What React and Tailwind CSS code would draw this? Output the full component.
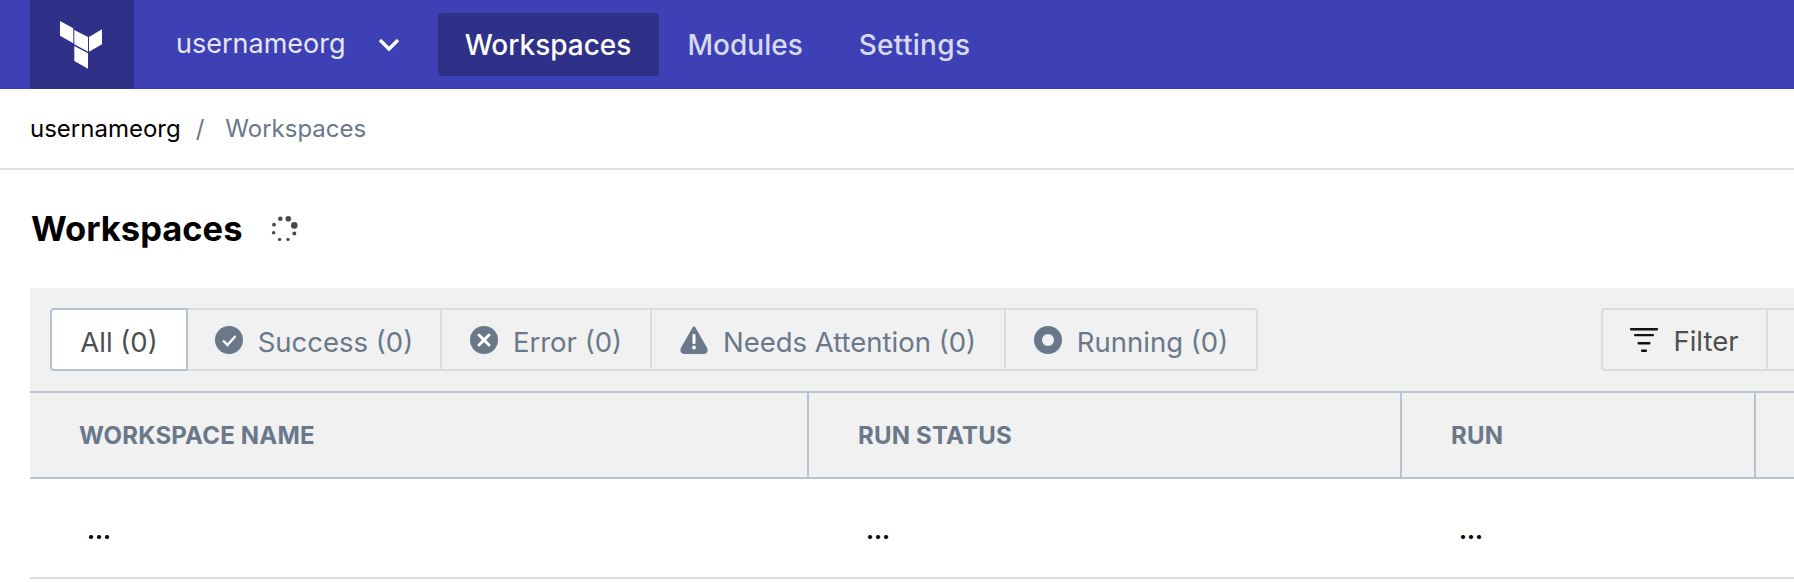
const slate = 'text-[#6a7889]';

function TerraformLogo() {
  return (
    <svg className="mr-[2px]" width="42" height="48" viewBox="60 20 42 48" fill="#fff">
      <path d="M60 20 L73.3 27.3 L73.3 42.3 L60 34.7 Z" />
      <path d="M74.3 29 L88 36 L88 50.7 L74.3 43.3 Z" />
      <path d="M89 36 L102 28.3 L102 43.3 L89 50.7 Z" />
      <path d="M74.3 45 L88 52.3 L88 67.7 L74.3 60 Z" />
    </svg>
  );
}

function Spinner() {
  const dots = [
    [10.3, 3.7, 2.3], [18.3, 3.7, 2.8], [24.3, 10.4, 3.3], [24.3, 18.4, 2],
    [18, 24.4, 1.7], [9.6, 24.4, 1.7], [3.6, 17.7, 1.8], [4, 9.7, 1.9],
  ];
  return (
    <svg width="28" height="28" viewBox="0 0 28 28" fill="#4a4a4a">
      {dots.map(([x, y, r], i) => (
        <circle key={i} cx={x} cy={y} r={r} />
      ))}
    </svg>
  );
}

function SuccessIcon() {
  return (
    <svg width="28" height="28" viewBox="0 0 28 28">
      <circle cx="14" cy="14" r="14" fill="#6a7889" />
      <path d="M8 14.5 L12.5 19 L20.5 10" fill="none" stroke="#fff" strokeWidth="2.4" />
    </svg>
  );
}

function ErrorIcon() {
  return (
    <svg width="28" height="28" viewBox="0 0 28 28">
      <circle cx="14" cy="14" r="14" fill="#6a7889" />
      <path d="M9 9 L19 19 M19 9 L9 19" fill="none" stroke="#fff" strokeWidth="3" strokeLinecap="round" />
    </svg>
  );
}

function WarningIcon() {
  return (
    <svg width="28" height="28" viewBox="0 0 28 28">
      <path d="M14 2 L26 23 Q26.5 26.5 24 26.5 L4 26.5 Q1.5 26.5 2 23 Z" fill="#6a7889" stroke="#6a7889" strokeWidth="3" strokeLinejoin="round" />
      <rect x="12.5" y="8" width="3" height="10" rx="1" fill="#fff" />
      <circle cx="14" cy="21.5" r="1.9" fill="#fff" />
    </svg>
  );
}

function RunningIcon() {
  return (
    <svg width="28" height="28" viewBox="0 0 28 28">
      <circle cx="14" cy="14" r="10" fill="none" stroke="#6a7889" strokeWidth="8" />
    </svg>
  );
}

function FilterIcon() {
  return (
    <svg width="28" height="24" viewBox="0 0 28 24" fill="#111">
      <rect x="0" y="0" width="28" height="2.6" rx="1" />
      <rect x="4" y="6" width="20" height="2.2" rx="1" />
      <rect x="7.5" y="14" width="13" height="2.4" rx="1" />
      <rect x="11" y="21.5" width="6" height="2.5" rx="1" />
    </svg>
  );
}

const onglets = [
  { label: 'Success (0)', icon: <SuccessIcon />, width: 'w-[254px]' },
  { label: 'Error (0)', icon: <ErrorIcon />, width: 'w-[210px]' },
  { label: 'Needs Attention (0)', icon: <WarningIcon />, width: 'w-[354px]' },
  { label: 'Running (0)', icon: <RunningIcon />, width: 'w-[252px]' },
];

const colonnes = [
  { titre: 'WORKSPACE NAME', width: 'w-[779px]' },
  { titre: 'RUN STATUS', width: 'w-[593px]' },
  { titre: 'RUN', width: 'w-[354px]' },
  { titre: '', width: 'w-[300px]' },
];

export default function App() {
  return (
    <div className="h-[582px] w-[1794px] overflow-hidden bg-white font-['Inter',sans-serif]">
      <nav className="flex h-[89px] items-center bg-[#3e41b5] pl-[30px]">
        <div className="flex h-full w-[104px] items-center justify-center bg-[#2f3088]">
          <TerraformLogo />
        </div>
        <div className="ml-[42px] flex items-center text-[27px] text-[#e6e6f6]">
          <span>usernameorg</span>
          <svg className="ml-[32px]" width="22" height="14" viewBox="0 0 22 14" fill="none" stroke="#fff" strokeWidth="3.4">
            <path d="M2 2 L11 11 L20 2" />
          </svg>
        </div>
        <a className="ml-[38px] flex h-[63px] w-[221px] items-center justify-center rounded-[4px] bg-[#2f3088] text-[28px] font-medium text-white">
          Workspaces
        </a>
        <a className="ml-[29px] text-[28px] font-medium text-[#d8d9f1]">Modules</a>
        <a className="ml-[56px] text-[28px] font-medium tracking-[0.3px] text-[#d8d9f1]">Settings</a>
      </nav>

      <div className="flex h-[81px] items-center border-b-2 border-[#e0e0e0] pl-[30px] text-[24px]">
        <span className="text-black">usernameorg</span>
        <span className={`ml-[15px] ${slate}`}>/</span>
        <span className={`ml-[21px] ${slate}`}>Workspaces</span>
      </div>

      <div className="flex h-[118px] items-center pl-[31px]">
        <h1 className="text-[34.5px] font-bold text-black">Workspaces</h1>
        <div className="ml-[28px]">
          <Spinner />
        </div>
      </div>

      <div className="ml-[30px] bg-[#f1f1f1]">
        <div className="flex h-[103px] items-start justify-between pl-[20px] pt-[20px]">
          <div className="flex h-[63px] text-[27.5px]">
            <button className="flex w-[138px] items-center justify-center rounded-l-[4px] border-2 border-[#b6c3d3] bg-white text-[#4f4f4f]">
              <span className="pt-[7px]">All (0)</span>
            </button>
            {onglets.map((o) => (
              <button
                key={o.label}
                className={`flex ${o.width} items-center justify-center gap-[15px] border-y-2 border-r-2 border-[#dcdcdc] ${slate} last:rounded-r-[4px]`}
              >
                {o.icon}
                <span className="pt-[7px]">{o.label}</span>
              </button>
            ))}
          </div>
          <div className="flex h-[63px] text-[27.5px] text-[#4f4f4f]">
            <button className="flex w-[167px] items-center justify-center gap-[15px] rounded-l-[4px] border-2 border-[#dcdcdc]">
              <FilterIcon />
              <span className="pt-[5px]">Filter</span>
            </button>
            <div className="w-[26px] border-y-2 border-[#dcdcdc]" />
          </div>
        </div>

        <div className="flex h-[88px] border-y-2 border-[#b6c3d3]">
          {colonnes.map((c) => (
            <div
              key={c.titre || 'vide'}
              className={`flex ${c.width} shrink-0 items-center border-r-2 border-[#b6c3d3] pl-[49px] pt-[2px] text-[24px] font-bold tracking-[0.2px] ${slate}`}
            >
              {c.titre}
            </div>
          ))}
        </div>
      </div>

      <div className="ml-[30px] flex h-[100px] border-b-2 border-[#dcdcdc]">
        {colonnes.map((c) => (
          <div
            key={c.titre || 'vide'}
            className={`flex ${c.width} shrink-0 items-center pl-[57px] pt-[5px] text-[24px] font-bold text-black`}
          >
            {c.titre ? '...' : ''}
          </div>
        ))}
      </div>
    </div>
  );
}
